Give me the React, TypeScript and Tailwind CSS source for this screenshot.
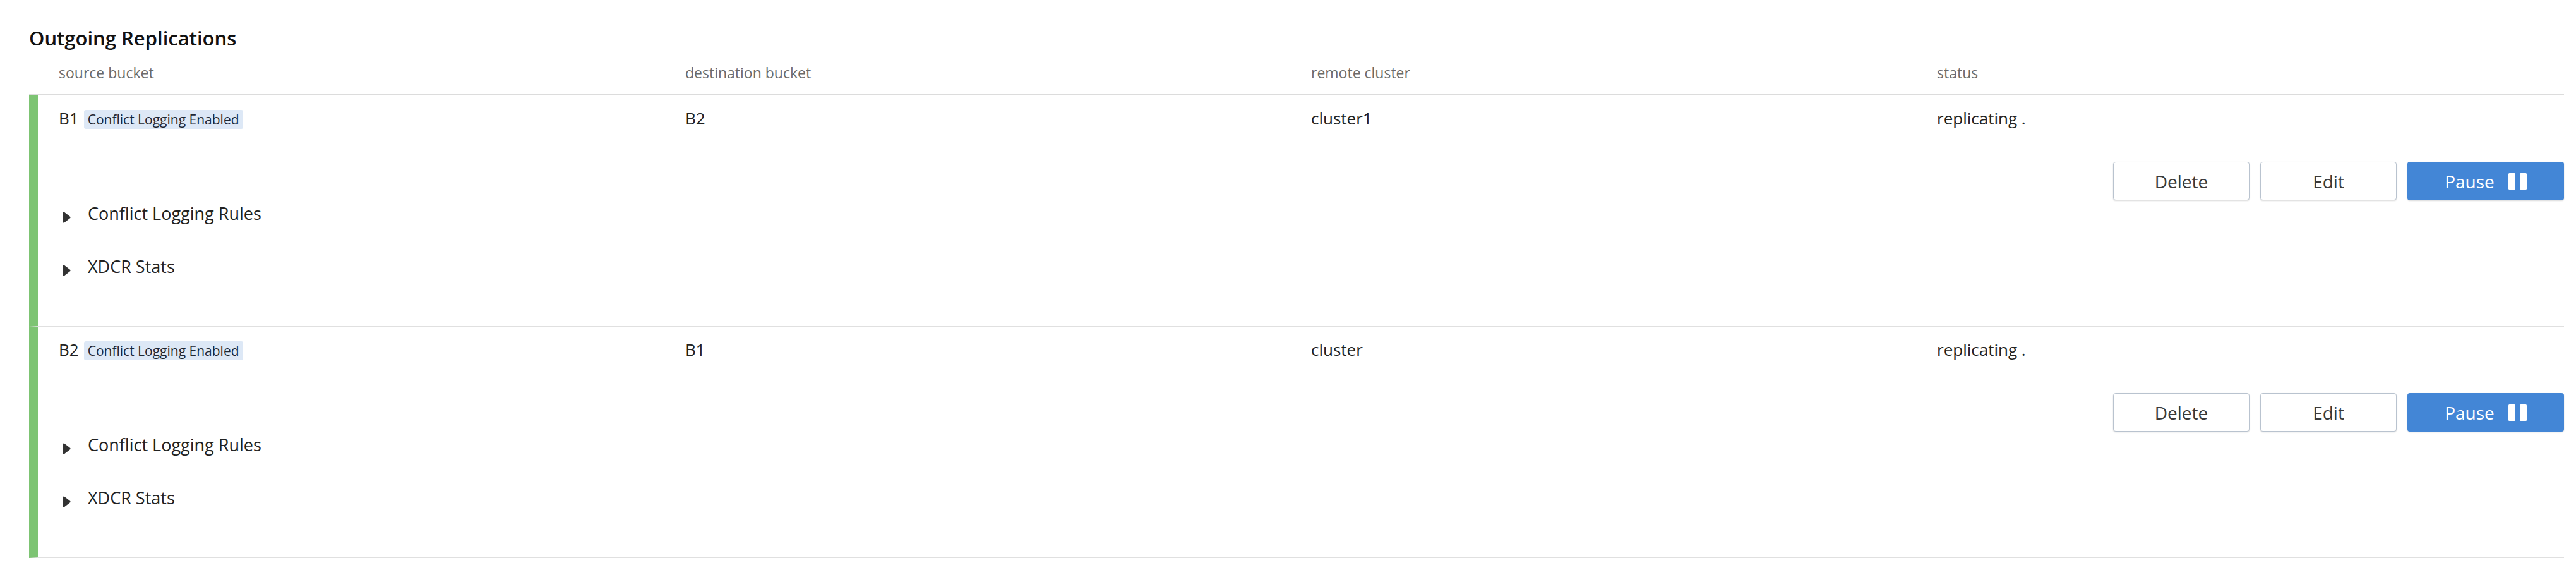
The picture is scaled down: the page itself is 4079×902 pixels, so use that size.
import React from "react";

type Rep = { src: string; dest: string; cluster: string; status: string };

const reps: Rep[] = [
  { src: "B1", dest: "B2", cluster: "cluster1", status: "replicating ." },
  { src: "B2", dest: "B1", cluster: "cluster", status: "replicating ." },
];

function Caret() {
  return (
    <svg width="13" height="18" viewBox="0 0 13 18" className="mt-[15px] ml-[6px] shrink-0">
      <path d="M2 2 L11 9 L2 16 Z" fill="#333" stroke="#333" strokeWidth="3" strokeLinejoin="round" />
    </svg>
  );
}

function PauseIcon() {
  return (
    <svg width="29" height="26" viewBox="0 0 29 26" className="ml-[22px]">
      <rect x="0" y="0" width="11" height="26" rx="1.5" fill="#fff" />
      <rect x="18" y="0" width="11" height="26" rx="1.5" fill="#fff" />
    </svg>
  );
}

function Row({ r }: { r: Rep }) {
  return (
    <div className="border-l-[14px] border-l-[#7dc473] border-b border-b-[#e0e0e0] pt-[18px] pb-[76px]">
      <div className="grid grid-cols-[992px_991px_991px_1fr] pl-[33px] text-[26px] leading-[36px] text-[#222]">
        <div className="flex items-baseline">
          <span>{r.src}</span>
          <span className="ml-[8px] h-[30px] px-[6px] rounded-[3px] bg-[#dde8f6] text-[21px] leading-[30px] text-[#1d2733]">
            Conflict Logging Enabled
          </span>
        </div>
        <div>{r.dest}</div>
        <div>{r.cluster}</div>
        <div>{r.status}</div>
      </div>
      <div className="mt-[51px] flex justify-end gap-[17px]">
        <button className="w-[216px] h-[61px] rounded-[4px] border border-[#b9c3cf] bg-white text-[28px] text-[#3a3a3a] shadow-[0_1px_2px_rgba(0,0,0,0.15)]">
          Delete
        </button>
        <button className="w-[216px] h-[61px] rounded-[4px] border border-[#b9c3cf] bg-white text-[28px] text-[#3a3a3a] shadow-[0_1px_2px_rgba(0,0,0,0.15)]">
          Edit
        </button>
        <button className="w-[248px] h-[61px] rounded-[4px] bg-[#4386d6] text-[28px] text-white flex items-center justify-center shadow-[0_1px_2px_rgba(0,0,0,0.15)]">
          <span>Pause</span>
          <PauseIcon />
        </button>
      </div>
      <div className="pl-[33px] text-[27px] leading-[36px] text-[#222]">
        <div className="mt-[3px] flex">
          <Caret />
          <span className="ml-[27px]">Conflict Logging Rules</span>
        </div>
        <div className="mt-[48px] flex">
          <Caret />
          <span className="ml-[27px]">XDCR Stats</span>
        </div>
      </div>
    </div>
  );
}

export default function App() {
  return (
    <div className="w-[4079px] min-h-[902px] bg-white pl-[46px] pr-[19px] pt-[40px] font-['Open_Sans',sans-serif]">
      <h2 className="text-[31px] leading-[40px] font-semibold text-[#111]">Outgoing Replications</h2>
      <div className="mt-[19px] grid grid-cols-[992px_991px_991px_1fr] pl-[47px] pb-[18px] border-b-2 border-b-[#dcdcdc] text-[23px] leading-[32px] text-[#6b6b6b]">
        <div>source bucket</div>
        <div>destination bucket</div>
        <div>remote cluster</div>
        <div>status</div>
      </div>
      {reps.map((r, i) => (
        <Row key={i} r={r} />
      ))}
    </div>
  );
}
